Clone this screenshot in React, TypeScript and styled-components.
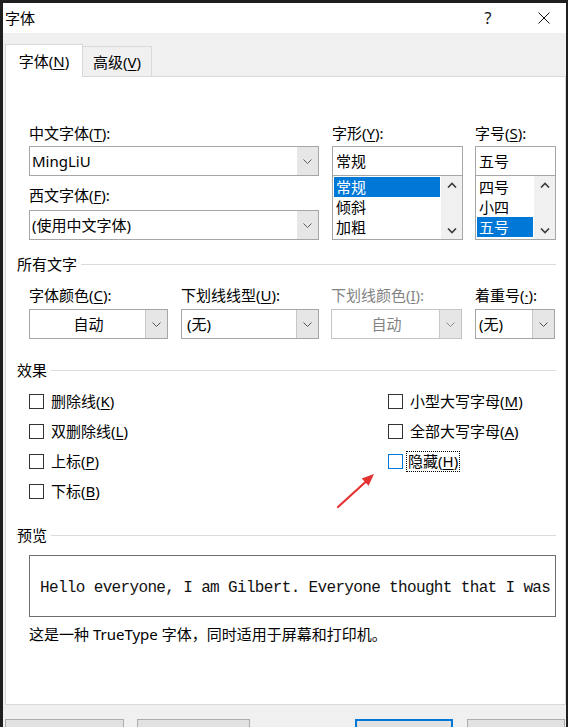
import styled, { createGlobalStyle } from "styled-components";

const ui = `"Noto Sans", "Noto Sans CJK SC", sans-serif`;

const GlobalStyle = createGlobalStyle`
  html, body {
    margin: 0;
    padding: 0;
    background: #1f1f1f;
  }
  body {
    font-family: ${ui};
    font-size: 15px;
    color: #000;
  }
`;

const Mn = styled.u`
  text-decoration: underline;
  text-underline-offset: 2px;
  text-decoration-thickness: 1px;
`;

const ChevronDown = ({ color = "#606060" }: { color?: string }) => (
  <svg width="9" height="5" viewBox="0 0 9 5">
    <polyline points="0.5,0.5 4.5,4.5 8.5,0.5" fill="none" stroke={color} strokeWidth="1" />
  </svg>
);

const ScrollArrow = ({ up }: { up?: boolean }) => (
  <svg width="10" height="6" viewBox="0 0 10 6">
    <polyline
      points={up ? "1,5.5 5,1.5 9,5.5" : "1,0.5 5,4.5 9,0.5"}
      fill="none"
      stroke="#3c3c3c"
      strokeWidth="1.6"
    />
  </svg>
);

const Frame = styled.div`
  width: 568px;
  height: 727px;
  box-sizing: border-box;
  padding: 3px 2px 0 3px;
  background: #1f1f1f;
  overflow: hidden;
`;

const Dialog = styled.div`
  height: 724px;
  background: #f0f0f0;
  display: flex;
  flex-direction: column;
  overflow: hidden;
`;

const TitleBar = styled.div`
  height: 30px;
  background: #fff;
  display: flex;
  align-items: center;
  padding-left: 2px;
  flex-shrink: 0;
`;

const Title = styled.div`
  flex: 1;
  font-size: 15px;
  line-height: 20px;
`;

const HelpButton = styled.div`
  width: 30px;
  margin-right: 19px;
  text-align: center;
  font-size: 16px;
  line-height: 20px;
  color: #111;
`;

const CloseButton = styled.div`
  width: 44px;
  height: 30px;
  display: flex;
  align-items: center;
  justify-content: center;
`;

const TabStrip = styled.div`
  display: flex;
  align-items: flex-end;
  height: 32px;
  margin-top: 11px;
  padding-left: 2px;
  flex-shrink: 0;
`;

const Tab = styled.div<{ $active?: boolean }>`
  box-sizing: border-box;
  display: flex;
  align-items: center;
  justify-content: center;
  line-height: 20px;
  border: 1px solid #d9d9d9;
  border-bottom: none;
  width: ${(p) => (p.$active ? "78px" : "69px")};
  height: ${(p) => (p.$active ? "33px" : "30px")};
  margin-bottom: ${(p) => (p.$active ? "-1px" : "0")};
  background: ${(p) => (p.$active ? "#fff" : "#f0f0f0")};
  border-left: ${(p) => (p.$active ? "1px solid #d9d9d9" : "none")};
  position: relative;
  z-index: ${(p) => (p.$active ? 1 : 0)};
  padding-bottom: ${(p) => (p.$active ? "1px" : "0")};
`;

const Panel = styled.div`
  position: relative;
  box-sizing: border-box;
  height: 629px;
  margin-left: 2px;
  background: #fff;
  border: 1px solid #d9d9d9;
  padding: 0 9px 0 11px;
  flex-shrink: 0;
`;

const Indent = styled.div`
  padding-left: 12px;
`;

const FontGrid = styled(Indent)`
  margin-top: 46px;
  display: grid;
  grid-template-columns: 290px 130px 81px;
  column-gap: 13px;
  & > :nth-child(2) {
    margin-right: -1px;
  }
`;

const Column = styled.div`
  display: flex;
  flex-direction: column;
`;

const Label = styled.div<{ $disabled?: boolean; $gap?: number }>`
  line-height: 20px;
  white-space: nowrap;
  color: ${(p) => (p.$disabled ? "#838383" : "#000")};
  margin-top: ${(p) => p.$gap ?? 0}px;
`;

const Combo = styled.div<{ $disabled?: boolean; $gap?: number }>`
  box-sizing: border-box;
  height: 30px;
  display: flex;
  background: #fff;
  border: 1px solid ${(p) => (p.$disabled ? "#c4c4c4" : "#a6a6a6")};
  margin-top: ${(p) => p.$gap ?? 0}px;
`;

const ComboText = styled.div<{ $center?: boolean; $disabled?: boolean; $pad?: number }>`
  flex: 1;
  line-height: 28px;
  padding-left: ${(p) => p.$pad ?? 2}px;
  text-align: ${(p) => (p.$center ? "center" : "left")};
  color: ${(p) => (p.$disabled ? "#838383" : "#000")};
  white-space: nowrap;
  overflow: hidden;
`;

const DropButton = styled.div<{ $width?: number; $edge?: boolean }>`
  width: ${(p) => p.$width ?? 21}px;
  background: #e6e6e6;
  border-left: ${(p) => (p.$edge ? "1px solid #c8c8c8" : "none")};
  display: flex;
  align-items: center;
  justify-content: center;
`;

const TextBox = styled.div`
  box-sizing: border-box;
  height: 30px;
  border: 1px solid #a6a6a6;
  padding-left: 3px;
  line-height: 28px;
  margin-top: 3px;
`;

const ListBox = styled.div`
  box-sizing: border-box;
  height: 64px;
  border: 1px solid #a6a6a6;
  border-top: none;
  display: flex;
`;

const ListItems = styled.div`
  flex: 1;
  padding: 1px 1px 0 1px;
`;

const ListItem = styled.div<{ $selected?: boolean }>`
  height: 20px;
  line-height: 20px;
  padding-left: 2px;
  background: ${(p) => (p.$selected ? "#0078d7" : "transparent")};
  color: ${(p) => (p.$selected ? "#fff" : "#000")};
`;

const ScrollBar = styled.div`
  width: 21px;
  background: #f0f0f0;
  display: flex;
  flex-direction: column;
  justify-content: space-between;
  align-items: center;
  padding: 6px 0 5px;
  box-sizing: border-box;
`;

const SectionHeader = styled.div<{ $gap: number }>`
  display: flex;
  align-items: center;
  gap: 4px;
  margin-top: ${(p) => p.$gap}px;
  line-height: 20px;
  &::after {
    content: "";
    flex: 1;
    height: 1px;
    background: #dcdcdc;
  }
`;

const StyleGrid = styled(Indent)`
  margin-top: 11px;
  display: grid;
  grid-template-columns: 139px 138px 130px 80px;
  column-gap: 13px;
  & > :nth-child(3) {
    margin-left: -1px;
  }
`;

const EffectsGrid = styled(Indent)`
  margin-top: 6px;
  display: grid;
  grid-template-columns: 359px 1fr;
`;

const CheckRow = styled.div`
  height: 30px;
  display: flex;
  align-items: center;
`;

const Box = styled.span<{ $hover?: boolean }>`
  box-sizing: border-box;
  width: 15px;
  height: 15px;
  border: 1px solid ${(p) => (p.$hover ? "#0078d7" : "#333")};
  background: #fff;
  margin-right: 6px;
  flex-shrink: 0;
`;

const CheckLabel = styled.span<{ $focus?: boolean }>`
  line-height: 19px;
  padding: 0 1px;
  margin-left: ${(p) => (p.$focus ? "-2px" : "0")};
  outline: ${(p) => (p.$focus ? "1px dotted #000" : "none")};
`;

const Preview = styled(Indent)`
  margin-top: 10px;
`;

const PreviewBox = styled.div`
  box-sizing: border-box;
  height: 62px;
  border: 1px solid #6e6e6e;
  display: flex;
  align-items: center;
  padding: 4px 0 0 10px;
  overflow: hidden;
  white-space: nowrap;
  font-family: "Liberation Mono", monospace;
  font-size: 16px;
  letter-spacing: -0.65px;
  color: #111;
`;

const Note = styled.div`
  margin-top: 7px;
  line-height: 20px;
`;

const Arrow = styled.svg`
  position: absolute;
  left: 325px;
  top: 390px;
`;

const ButtonRow = styled.div`
  display: flex;
  margin-top: 14px;
  padding-left: 2px;
`;

const Button = styled.div<{ $w: number; $gap: number; $default?: boolean }>`
  box-sizing: border-box;
  width: ${(p) => p.$w}px;
  height: 30px;
  margin-left: ${(p) => p.$gap}px;
  background: #e1e1e1;
  border: ${(p) => (p.$default ? "2px solid #0078d7" : "1px solid #adadad")};
  flex-shrink: 0;
`;

const Combo1 = ({
  text,
  center,
  disabled,
  pad,
}: {
  text: string;
  center?: boolean;
  disabled?: boolean;
  pad?: number;
}) => (
  <Combo $disabled={disabled} $gap={4}>
    <ComboText $center={center} $disabled={disabled} $pad={pad}>
      {text}
    </ComboText>
    <DropButton $edge>
      <ChevronDown color={disabled ? "#8a8a8a" : "#505050"} />
    </DropButton>
  </Combo>
);

export default function App() {
  return (
    <>
      <GlobalStyle />
      <Frame>
        <Dialog>
          <TitleBar>
            <Title>字体</Title>
            <HelpButton>?</HelpButton>
            <CloseButton>
              <svg width="12" height="12" viewBox="0 0 12 12">
                <path d="M0.5 0.5 L11.5 11.5 M11.5 0.5 L0.5 11.5" stroke="#111" strokeWidth="1" />
              </svg>
            </CloseButton>
          </TitleBar>

          <TabStrip>
            <Tab $active>
              字体(<Mn>N</Mn>)
            </Tab>
            <Tab>
              高级(<Mn>V</Mn>)
            </Tab>
          </TabStrip>

          <Panel>
            <FontGrid>
              <Column>
                <Label>
                  中文字体(<Mn>T</Mn>):
                </Label>
                <Combo $gap={3}>
                  <ComboText $pad={2}>MingLiU</ComboText>
                  <DropButton>
                    <ChevronDown />
                  </DropButton>
                </Combo>
                <Label $gap={9}>
                  西文字体(<Mn>F</Mn>):
                </Label>
                <Combo $gap={5}>
                  <ComboText $pad={2}>(使用中文字体)</ComboText>
                  <DropButton>
                    <ChevronDown />
                  </DropButton>
                </Combo>
              </Column>

              <Column>
                <Label>
                  字形(<Mn>Y</Mn>):
                </Label>
                <TextBox>常规</TextBox>
                <ListBox>
                  <ListItems>
                    <ListItem $selected>常规</ListItem>
                    <ListItem>倾斜</ListItem>
                    <ListItem>加粗</ListItem>
                  </ListItems>
                  <ScrollBar>
                    <ScrollArrow up />
                    <ScrollArrow />
                  </ScrollBar>
                </ListBox>
              </Column>

              <Column>
                <Label>
                  字号(<Mn>S</Mn>):
                </Label>
                <TextBox>五号</TextBox>
                <ListBox>
                  <ListItems>
                    <ListItem>四号</ListItem>
                    <ListItem>小四</ListItem>
                    <ListItem $selected>五号</ListItem>
                  </ListItems>
                  <ScrollBar>
                    <ScrollArrow up />
                    <ScrollArrow />
                  </ScrollBar>
                </ListBox>
              </Column>
            </FontGrid>

            <SectionHeader $gap={14}>所有文字</SectionHeader>
            <StyleGrid>
              <Column>
                <Label>
                  字体颜色(<Mn>C</Mn>):
                </Label>
                <Combo1 text="自动" center />
              </Column>
              <Column>
                <Label>
                  下划线线型(<Mn>U</Mn>):
                </Label>
                <Combo1 text="(无)" pad={5} />
              </Column>
              <Column>
                <Label $disabled>
                  下划线颜色(<Mn>I</Mn>):
                </Label>
                <Combo1 text="自动" center disabled />
              </Column>
              <Column>
                <Label>
                  着重号(<Mn>·</Mn>):
                </Label>
                <Combo1 text="(无)" pad={3} />
              </Column>
            </StyleGrid>

            <SectionHeader $gap={21}>效果</SectionHeader>
            <EffectsGrid>
              <Column>
                <CheckRow>
                  <Box />
                  <CheckLabel>
                    删除线(<Mn>K</Mn>)
                  </CheckLabel>
                </CheckRow>
                <CheckRow>
                  <Box />
                  <CheckLabel>
                    双删除线(<Mn>L</Mn>)
                  </CheckLabel>
                </CheckRow>
                <CheckRow>
                  <Box />
                  <CheckLabel>
                    上标(<Mn>P</Mn>)
                  </CheckLabel>
                </CheckRow>
                <CheckRow>
                  <Box />
                  <CheckLabel>
                    下标(<Mn>B</Mn>)
                  </CheckLabel>
                </CheckRow>
              </Column>
              <Column>
                <CheckRow>
                  <Box />
                  <CheckLabel>
                    小型大写字母(<Mn>M</Mn>)
                  </CheckLabel>
                </CheckRow>
                <CheckRow>
                  <Box />
                  <CheckLabel>
                    全部大写字母(<Mn>A</Mn>)
                  </CheckLabel>
                </CheckRow>
                <CheckRow>
                  <Box $hover />
                  <CheckLabel $focus>
                    隐藏(<Mn>H</Mn>)
                  </CheckLabel>
                </CheckRow>
              </Column>
            </EffectsGrid>

            <SectionHeader $gap={19}>预览</SectionHeader>
            <Preview>
              <PreviewBox>Hello everyone, I am Gilbert. Everyone thought that I was</PreviewBox>
              <Note>这是一种 TrueType 字体，同时适用于屏幕和打印机。</Note>
            </Preview>

            <Arrow width="48" height="46" viewBox="0 0 48 46">
              <line x1="7" y1="40" x2="35" y2="14.5" stroke="#e53232" strokeWidth="2.2" strokeLinecap="round" />
              <polygon points="43,7 37.6,18.8 30.7,11.4" fill="#e53232" />
            </Arrow>
          </Panel>

          <ButtonRow>
            <Button $w={119} $gap={0} />
            <Button $w={113} $gap={13} />
            <Button $w={98} $gap={105} $default />
            <Button $w={98} $gap={14} />
          </ButtonRow>
        </Dialog>
      </Frame>
    </>
  );
}
